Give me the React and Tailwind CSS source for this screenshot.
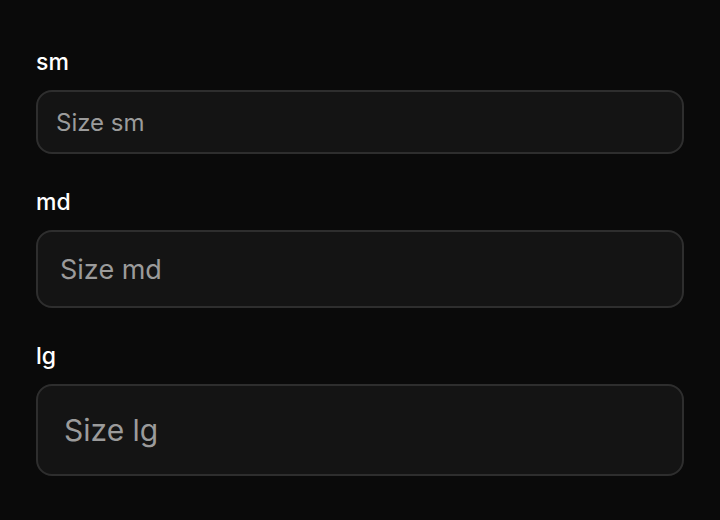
const fields = [
  { label: "sm", placeholder: "Size sm", box: "h-[64px] pl-[18px] pr-5 text-[24px]" },
  { label: "md", placeholder: "Size md", box: "h-[78px] pl-[22px] pr-6 text-[27px]" },
  { label: "lg", placeholder: "Size lg", box: "h-[92px] pl-[26px] pr-7 text-[30px]" },
];

export default function App() {
  return (
    <div
      className="min-h-[520px] w-[720px] bg-[#0a0a0a] px-9 pt-12"
      style={{ fontFamily: "Inter, 'Noto Sans', sans-serif" }}
    >
      <div className="flex flex-col gap-[34px]">
        {fields.map((f) => (
          <div key={f.label} className="flex flex-col gap-3.5">
            <label className="text-[23px] leading-[28px] font-medium text-white">{f.label}</label>
            <input
              placeholder={f.placeholder}
              className={`w-full rounded-2xl border-2 border-[#2e2e2e] bg-[#141414] text-white outline-none placeholder:text-[#9b9b9b] ${f.box}`}
            />
          </div>
        ))}
      </div>
    </div>
  );
}
